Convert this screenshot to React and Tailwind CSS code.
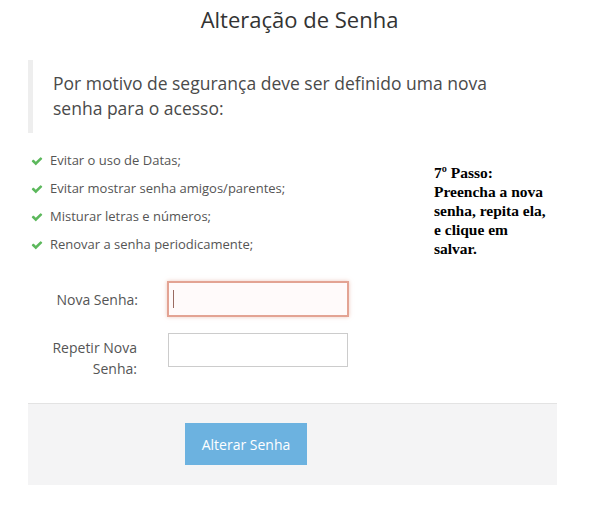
const dicas = [
  'Evitar o uso de Datas;',
  'Evitar mostrar senha amigos/parentes;',
  'Misturar letras e números;',
  'Renovar a senha periodicamente;',
]

function CheckIcon() {
  return (
    <svg viewBox="0 0 1792 1792" className="w-[12px] h-[12px] mr-[7px] fill-[#5cb85c]">
      <path d="M1671 566q0 40-28 68l-724 724-136 136q-28 28-68 28t-68-28l-136-136-362-362q-28-28-28-68t28-68l136-136q28-28 68-28t68 28l294 295 656-657q28-28 68-28t68 28l136 136q28 28 28 68z" />
    </svg>
  )
}

export default function App() {
  return (
    <div className="w-[599px] h-[525px] bg-white text-[#333] font-['Open_Sans',sans-serif] overflow-hidden">
      <h1 className="pt-[4px] text-center text-[22px] leading-[30px] font-normal text-[#333]">
        Alteração de Senha
      </h1>

      <div className="ml-[28px] mr-[42px] mt-[26px] border-l-[5px] border-[#eeeeee] pl-[20px] pt-[11px] pb-[12px]">
        <p className="text-[17.5px] leading-[25px] font-normal text-[#4a4a4a] w-[470px]">
          Por motivo de segurança deve ser definido uma nova senha para o acesso:
        </p>
      </div>

      <div className="flex mt-[14px]">
        <ul className="ml-[31px] w-[403px] flex flex-col">
          {dicas.map((d) => (
            <li key={d} className="flex items-center h-[28px] text-[13px] text-[#555]">
              <CheckIcon />
              {d}
            </li>
          ))}
        </ul>
        <div className="pt-[16px] font-['Liberation_Serif',serif] font-bold text-[15.5px] leading-[19px] text-black whitespace-nowrap">
          7º Passo:
          <br />
          Preencha a nova
          <br />
          senha, repita ela,
          <br />
          e clique em
          <br />
          salvar.
        </div>
      </div>

      <div className="ml-[28px] mr-[42px] mt-[22px] flex flex-col gap-[16px]">
        <div className="flex items-center">
          <label className="w-[125px] pr-[15px] text-right text-[14px] text-[#555]">Nova Senha:</label>
          <div className="ml-[14px] w-[182px] h-[36px] border-2 border-[#e3a393] bg-[#fffafa] shadow-[0_0_4px_rgba(227,163,147,0.6)] flex items-center pl-[4px]">
            <span className="w-[1px] h-[18px] bg-[#9a6a60]" />
          </div>
        </div>
        <div className="flex items-start">
          <label className="w-[125px] pr-[16px] pt-[4px] text-right text-[14px] leading-[21px] text-[#555]">
            Repetir Nova
            <br />
            Senha:
          </label>
          <div className="ml-[15px] w-[180px] h-[34px] border border-[#cccccc] bg-white" />
        </div>
      </div>

      <div className="ml-[28px] mr-[42px] mt-[24px] h-[82px] bg-[#f4f4f5] border-t border-[#e3e3e3] pl-[157px] pt-[19px]">
        <button className="w-[122px] h-[42px] bg-[#6cb2e0] text-white text-[14px]">Alterar Senha</button>
      </div>
    </div>
  )
}
